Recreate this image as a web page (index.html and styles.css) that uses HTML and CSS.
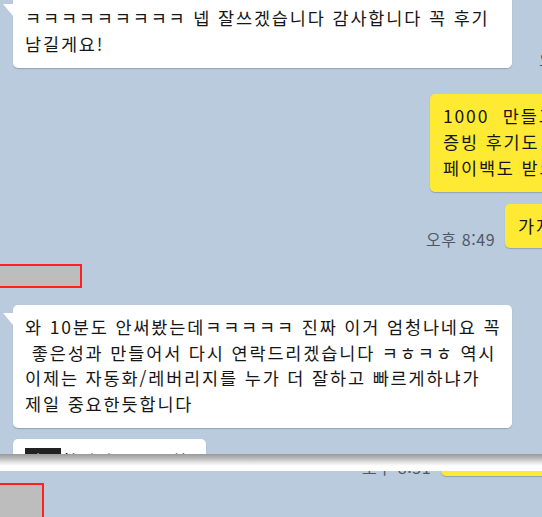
FILE: index.html
```html
<!DOCTYPE html>
<html lang="ko">
<head>
<meta charset="utf-8">
<title>채팅</title>
<link rel="stylesheet" href="styles.css">
</head>
<body>
<div class="screen">
  <section class="shot shot-a">
    <div class="msg-row other first">
      <div class="bubble white tail wide">ㅋㅋㅋㅋㅋㅋㅋㅋㅋ 넵 잘쓰겠습니다 감사합니다 꼭 후기<br>남길게요!</div>
      <span class="time time-cut">오후 8:48</span>
    </div>
    <div class="msg-row mine r1">
      <div class="bubble yellow">1000&nbsp; 만들고 나서<br>증빙 후기도 남겨주시면<br>페이백도 받으실 수 있습니다</div>
    </div>
    <div class="msg-row mine r2">
      <span class="time">오후 8:49</span>
      <div class="bubble yellow">가져가세요</div>
    </div>
    <div class="name-row n1"><span class="redact"></span></div>
    <div class="msg-row other m2">
      <div class="bubble white tail wide">와 10분도 안써봤는데ㅋㅋㅋㅋㅋ 진짜 이거 엄청나네요 꼭<br>&nbsp;좋은성과 만들어서 다시 연락드리겠습니다 ㅋㅎㅋㅎ 역시<br>이제는 자동화/레버리지를 누가 더 잘하고 빠르게하냐가<br>제일 중요한듯합니다</div>
    </div>
    <div class="msg-row other m3">
      <div class="bubble white short"><span class="hl">지금</span>합니다. 좋은 하루</div>
    </div>
  </section>
  <div class="divider"></div>
  <section class="shot shot-b">
    <div class="msg-row mine r3">
      <span class="time">오후 8:51</span>
      <div class="bubble yellow">감사합니다 수고하세요</div>
    </div>
    <div class="name-row n2"><span class="redact small"></span></div>
  </section>
</div>
</body>
</html>
```

FILE: styles.css
```css
html, body {
  margin: 0;
  padding: 0;
  height: 100%;
  overflow: hidden;
  background: #b9cbdd;
}

body {
  font-family: "Noto Sans CJK KR", "Noto Sans", sans-serif;
  color: #161616;
}

.screen {
  width: 542px;
  height: 517px;
  overflow: hidden;
  display: flex;
  flex-direction: column;
}

.shot {
  overflow: hidden;
  flex: none;
}

.shot-a {
  height: 454px;
}

.shot-b {
  flex: 1;
}

.divider {
  flex: none;
  height: 17px;
  background: linear-gradient(#9a9a9a 0%, #b9b9b9 25%, #e4e4e4 50%, #ffffff 70%, #ffffff 100%);
}

.msg-row {
  display: flex;
  align-items: flex-end;
  white-space: nowrap;
}

.other {
  padding-left: 13px;
}

.first {
  margin-top: -4px;
}

.bubble {
  position: relative;
  flex: none;
  border-radius: 5px;
  box-shadow: 0 1px 1px rgba(70, 90, 110, 0.35);
  font-size: 17.5px;
  letter-spacing: 1.85px;
  line-height: 25.5px;
}

.white {
  background: #ffffff;
  padding: 9px 12px 12px 12px;
}

.wide {
  width: 499px;
  box-sizing: border-box;
}

.short {
  width: 193px;
  box-sizing: border-box;
}

.tail::before {
  content: "";
  position: absolute;
  left: -10px;
  top: 8px;
  width: 0;
  height: 0;
  border-top: 12px solid #ffffff;
  border-left: 10px solid transparent;
}

.yellow {
  background: #ffea33;
  padding: 9px 13px 9px 13px;
  line-height: 26px;
}

.r1 {
  margin-top: 26px;
  padding-left: 430px;
}

.r1 .yellow {
  padding-bottom: 11px;
}

.r2 {
  margin-top: 12px;
  padding-left: 426px;
  gap: 8px;
}

.time {
  flex: none;
  width: 71px;
  font-size: 16px;
  letter-spacing: 0.6px;
  line-height: 18px;
  color: #4f5966;
}

.time-cut {
  margin-left: 27px;
}

.name-row {
  display: flex;
}

.n1 {
  margin-top: 16px;
}

.redact {
  display: block;
  width: 84px;
  height: 24px;
  margin-left: -2px;
  box-sizing: border-box;
  border: 2px solid #ff2020;
  background: #bdbdbd;
}

.redact.small {
  width: 46px;
  height: 38px;
}

.m2 {
  margin-top: 17px;
}

.m3 {
  margin-top: 11px;
}

.hl {
  background: #222222;
  color: #f2f2f2;
}

.r3 {
  margin-top: -39px;
  padding-left: 362px;
  gap: 8px;
}

.n2 {
  margin-top: 7px;
}
```
